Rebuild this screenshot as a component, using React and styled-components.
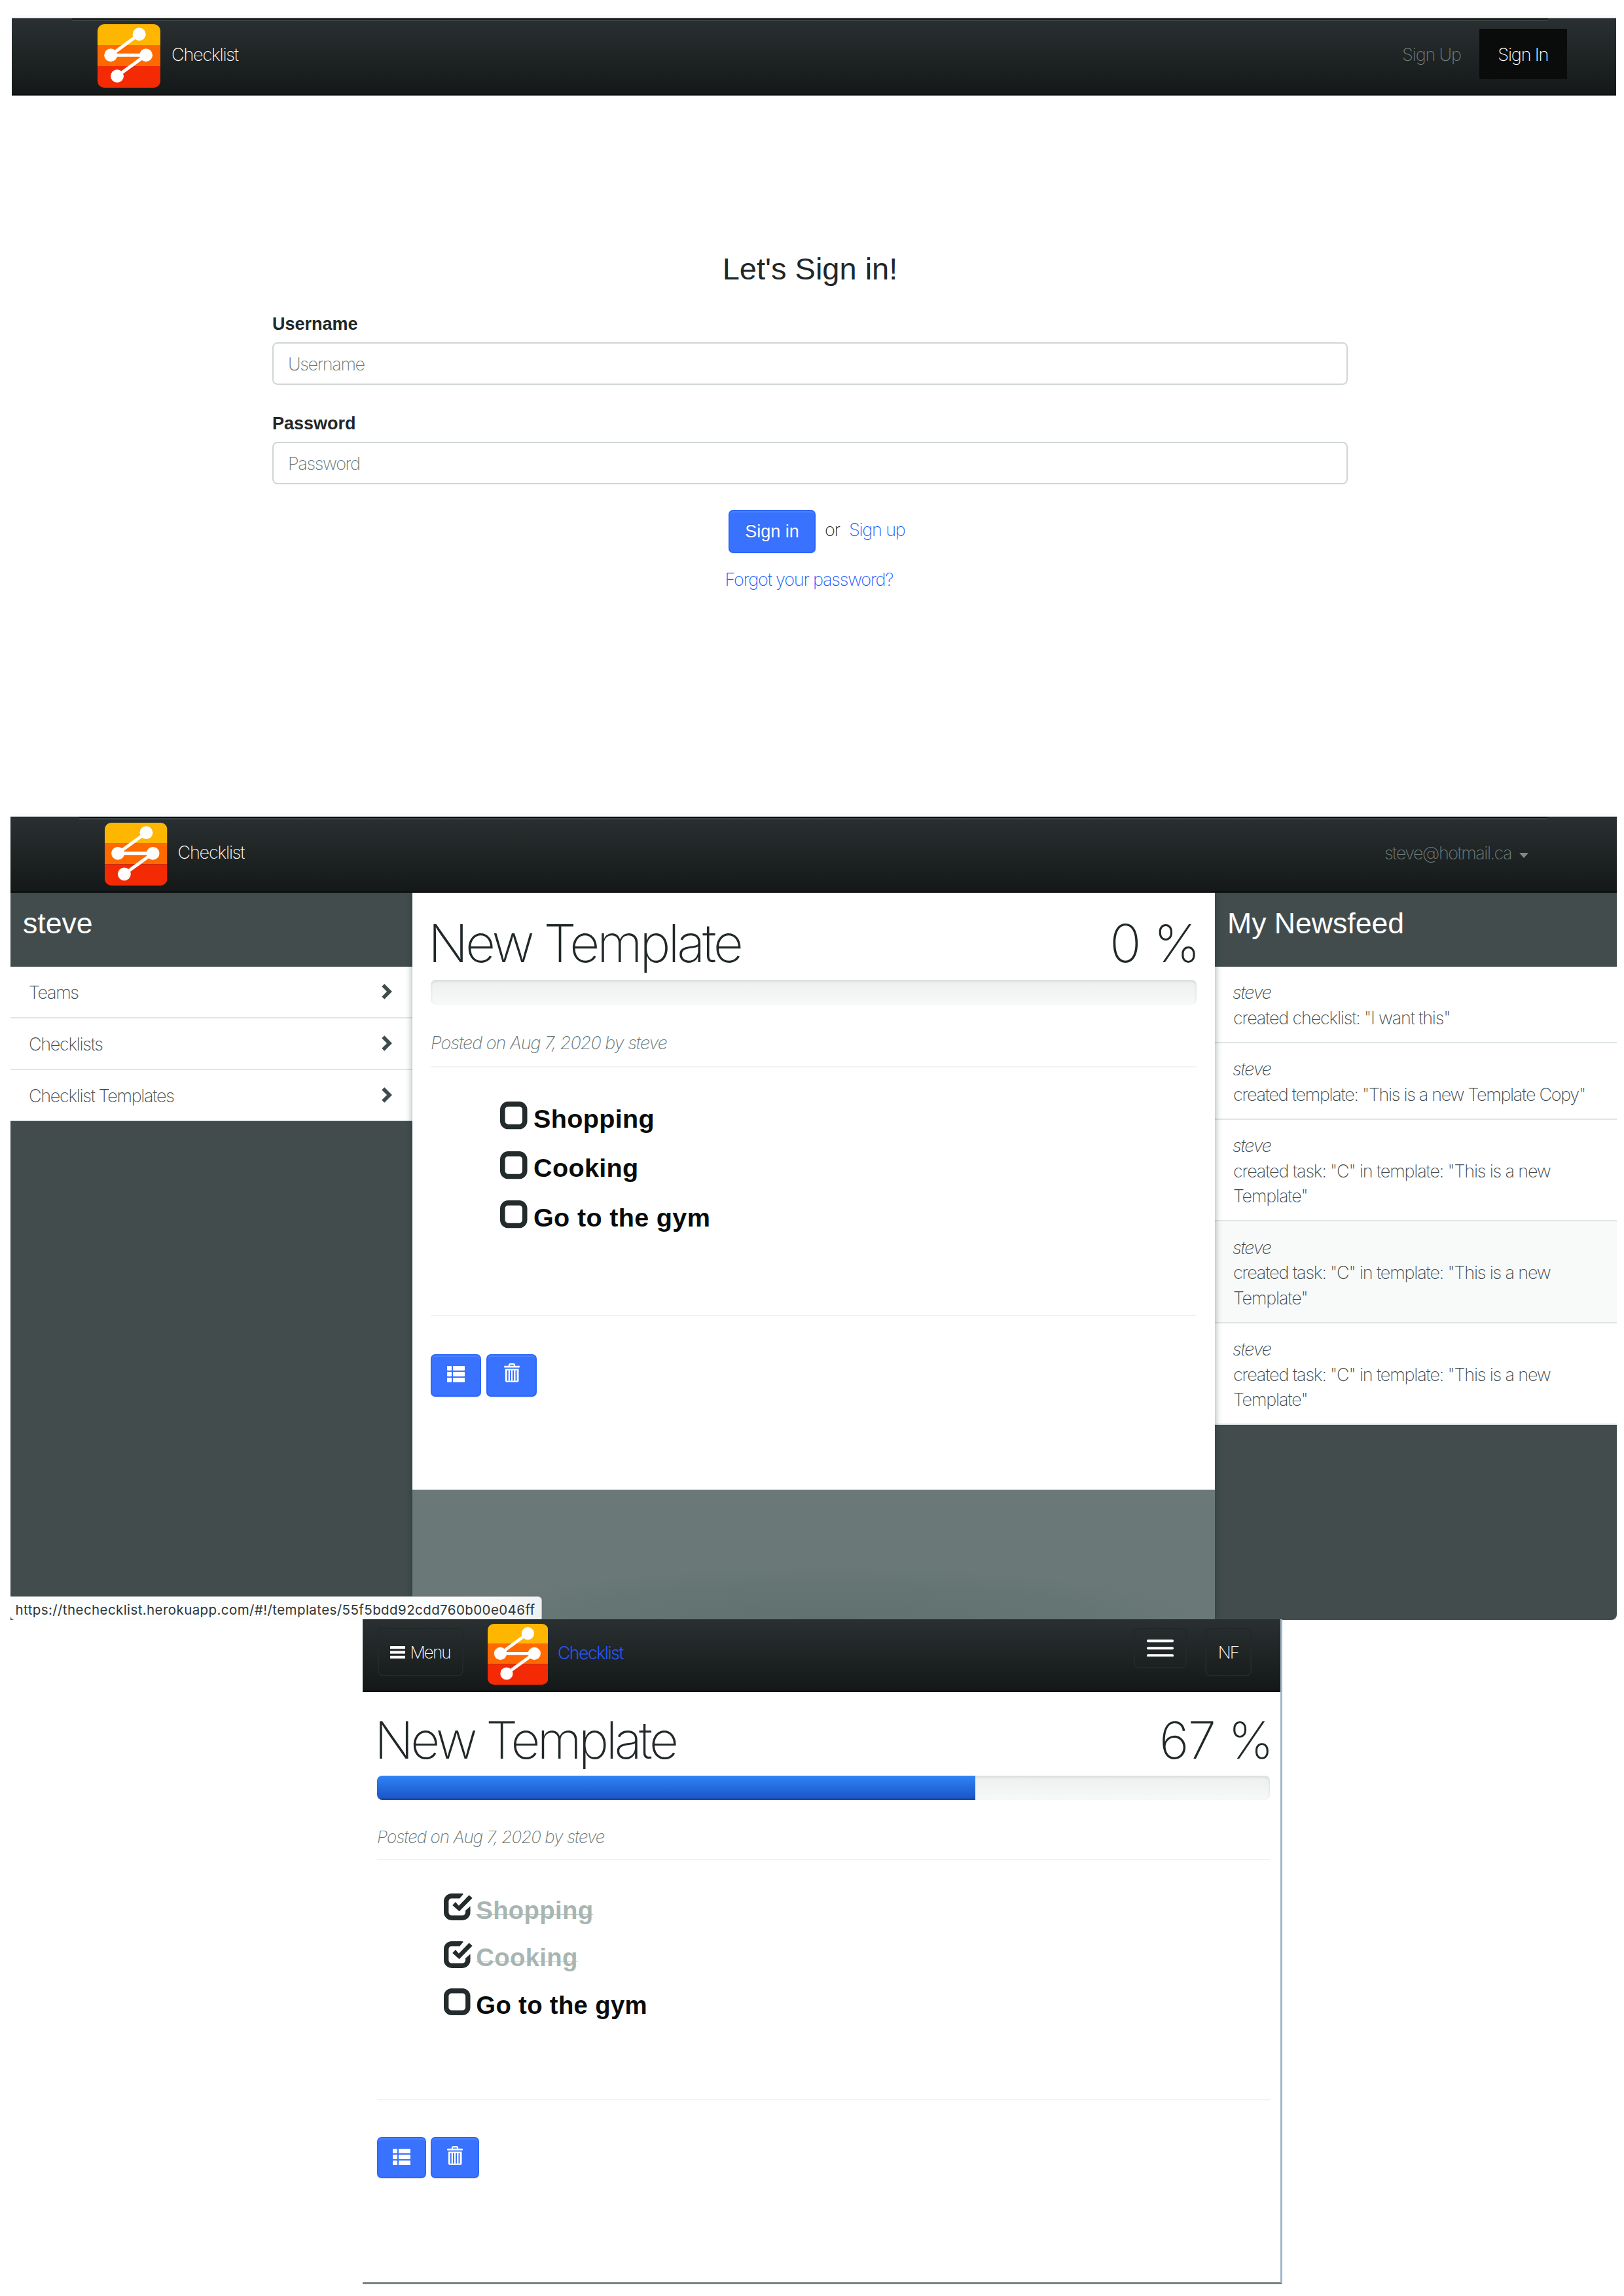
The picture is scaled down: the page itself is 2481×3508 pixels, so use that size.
import React from 'react';
import styled, { createGlobalStyle, css } from 'styled-components';

const light = '"Inter", "Liberation Sans", Helvetica, sans-serif';
const solid = '"Liberation Sans", Helvetica, Arial, sans-serif';

const GlobalStyle = createGlobalStyle`
  *, *::before, *::after { box-sizing: border-box; }
  body {
    margin: 0;
    background: #fff;
    color: #212829;
    font-family: ${light};
    font-size: 27px;
    font-weight: 240;
    font-kerning: normal;
  }
  a { text-decoration: none; color: inherit; }
  svg { display: block; flex: none; }
`;

const Page = styled.main`
  width: 2481px;
  height: 3508px;
  overflow: hidden;
  display: flex;
  flex-direction: column;
  padding-top: 28px;
`;

/* ---------- navigation bar ---------- */

const Nav = styled.nav`
  position: relative;
  z-index: 3;
  display: flex;
  align-items: flex-start;
  height: ${(p) => p.$height}px;
  padding: ${(p) => p.$padding};
  background: linear-gradient(#2a3032, #222728 36%, #141818);
  border-bottom: 2px solid #0a0c0c;
  ${(p) =>
    p.$edge &&
    css`
      box-shadow: 0 -1px 0 #c4c8c8, 0 -5px 0 #fbfbfb;
      &::before {
        content: '';
        position: absolute;
        top: 0;
        left: ${p.$edge[0]}px;
        right: ${p.$edge[1]}px;
        height: 4px;
        background: linear-gradient(#0d0f0f 50%, #394443 50%);
      }
    `}
`;

const Brand = styled.a`
  display: flex;
  align-items: flex-start;
  gap: ${(p) => p.$gap}px;
  margin: ${(p) => p.$top}px auto 0 0;
`;

const BrandName = styled.span`
  margin-top: ${(p) => p.$top}px;
  line-height: 40px;
  font-size: ${(p) => p.$size || 27}px;
  letter-spacing: ${(p) => (p.$color ? -1.45 : -1.17)}px;
  font-weight: ${(p) => (p.$color ? 300 : 200)};
  color: ${(p) => p.$color || '#fff'};
`;

const NavLinks = styled.div`
  display: flex;
  margin-top: 16px;
`;

const NavLink = styled.a`
  width: ${(p) => p.$width}px;
  height: 77px;
  line-height: 79px;
  text-align: center;
  letter-spacing: -1.15px;
  color: ${(p) => (p.$active ? '#fff' : '#6f7d7b')};
  background: ${(p) => (p.$active ? '#0a0c0c' : 'transparent')};
`;

const Account = styled.a`
  display: flex;
  align-items: center;
  gap: 12px;
  margin-top: 36px;
  line-height: 40px;
  letter-spacing: -1.5px;
  color: #6f7d7b;
`;

const Caret = styled.i`
  margin-top: 5px;
  border: 7.5px solid transparent;
  border-top: 8px solid #7d8b89;
  border-bottom: 0;
`;

const NavToggle = styled.button`
  display: flex;
  align-items: center;
  justify-content: center;
  gap: 7px;
  width: ${(p) => p.$width}px;
  height: ${(p) => p.$height}px;
  margin: 13px ${(p) => p.$after}px 0 0;
  padding: 0;
  border: 2px solid #232828;
  border-radius: 8px;
  background: transparent;
  color: #fff;
  font: inherit;
  font-size: 26px;
  letter-spacing: -1.9px;
`;

const Logo = ({ width, height }) => (
  <svg width={width} height={height} viewBox="0 0 96 97" preserveAspectRatio="none">
    <clipPath id="logoShape">
      <rect width="96" height="97" rx="10" />
    </clipPath>
    <g clipPath="url(#logoShape)">
      <rect width="96" height="32" fill="#ffb600" />
      <rect y="32" width="96" height="32" fill="#ff6a00" />
      <rect y="64" width="96" height="33" fill="#f42a05" />
    </g>
    <path d="M63.7 15.3 20.2 47.3H74L30 79.3" fill="none" stroke="#fff" strokeWidth="5" />
    <g fill="#fff">
      <circle cx="63.7" cy="15.3" r="10" />
      <circle cx="20.2" cy="47.3" r="10" />
      <circle cx="74" cy="47.3" r="10" />
      <circle cx="30" cy="79.3" r="10" />
    </g>
  </svg>
);

const Bars = ({ width, height, thickness, radius = 0 }) => (
  <svg width={width} height={height}>
    {[0, (height - thickness) / 2, height - thickness].map((y) => (
      <rect key={y} y={y} width={width} height={thickness} rx={radius} fill="#fff" />
    ))}
  </svg>
);

/* ---------- sign in ---------- */

const SignInWindow = styled.section`
  flex: none;
  width: 2451px;
  height: 1220px;
  margin-left: 18px;
`;

const Form = styled.form`
  display: flex;
  flex-direction: column;
  width: 1643px;
  margin: 235px 0 0 398px;
`;

const FormTitle = styled.h3`
  margin: 0 0 34px;
  text-align: center;
  font: 400 47px/60px ${solid};
`;

const Label = styled.label`
  margin-bottom: 7.5px;
  font: 700 27px/40px ${solid};
`;

const Input = styled.input`
  height: 65px;
  margin-bottom: 39.5px;
  padding: 2px 22px 0;
  border: 2px solid #cfd6d4;
  border-radius: 8px;
  background: #fff;
  font: inherit;
  letter-spacing: -1.35px;
  outline: none;
  &::placeholder { color: #6d7b78; opacity: 1; }
`;

const Actions = styled.div`
  display: flex;
  padding-left: 697px;
  line-height: 62px;
  letter-spacing: -1.1px;
`;

const primary = css`
  border: 2px solid #2d67fb;
  border-radius: 7px;
  background: #3872ff;
  box-shadow: inset 0 2px 0 #4a84ff, 0 1px 2px rgba(0, 0, 0, 0.1);
  color: #fff;
`;

const SubmitButton = styled.button`
  ${primary}
  width: 133px;
  height: 66px;
  margin-right: 14px;
  padding: 1px 0 0;
  font: 400 27px ${solid};
  text-shadow: 0 -1px 0 rgba(0, 0, 0, 0.25);
`;

const FormLink = styled.a`
  margin-left: ${(p) => p.$left}px;
  margin-top: ${(p) => p.$top || 0}px;
  line-height: ${(p) => p.$line}px;
  letter-spacing: -1.2px;
  color: #1a61ff;
`;

/* ---------- dashboard ---------- */

const Dashboard = styled.section`
  flex: none;
  position: relative;
  width: 2454px;
  margin-left: 16px;
`;

const Columns = styled.div`
  display: grid;
  grid-template-columns: 614px 1226px 614px;
  height: 1111px;
`;

const SidePanel = styled.aside`
  background: #424c4d;
  border-radius: 0 0 ${(p) => (p.$rounded ? '8px' : '0')} 0;
`;

const PanelTitle = styled.h3`
  height: 113px;
  margin: 0;
  padding: 17px 0 0 19px;
  font: 400 44.6px/60px ${solid};
  color: #fff;
`;

const MenuRow = styled.a`
  display: flex;
  align-items: flex-start;
  justify-content: space-between;
  height: 78.75px;
  padding: 0 31px 0 28px;
  border-bottom: 2px solid #dfe5e4;
  background: #fff;
  line-height: 80px;
  letter-spacing: -1.32px;
  color: #3f4b4c;
`;

const Chevron = styled.svg`
  margin-top: 26px;
`;

const NewsItem = styled.div`
  padding: 21.3px 28px 16.4px 27px;
  border-bottom: 2px solid #dfe5e4;
  background: ${(p) => (p.$hover ? '#f8f9f9' : '#fff')};
  line-height: 38.6px;
  letter-spacing: -1.22px;
  color: #3f4b4c;
`;

const NewsAuthor = styled.em`
  display: block;
`;

const NewsText = styled.span`
  display: block;
  margin-left: 1px;
  letter-spacing: ${(p) => p.$spacing || -1.2}px;
`;

const Center = styled.div`
  position: relative;
  z-index: 1;
  background: radial-gradient(ellipse 560px 80px at 52% 100%, #617170, #657574 70%, #6a7978 100%);
  background-color: #6a7978;
  box-shadow: 0 0 10px rgba(20, 45, 42, 0.45);
`;

const StatusBar = styled.div`
  position: absolute;
  z-index: 2;
  left: 0;
  bottom: 0;
  width: 812px;
  height: 36px;
  padding-left: 7.5px;
  border-top: 1px solid #b9bfbf;
  border-right: 1px solid #b9bfbf;
  border-radius: 0 6px 0 6px;
  background: linear-gradient(90deg, #fbfcfc 85%, #f0f2f2);
  font-size: 20.5px;
  font-weight: 400;
  line-height: 40px;
  letter-spacing: 0.41px;
  color: #2f3738;
  white-space: nowrap;
`;

/* ---------- template card, shared by desktop and phone ---------- */

const Card = styled.article`
  height: ${(p) => p.$m.height}px;
  padding: ${(p) => p.$m.padding};
  background: #fff;
`;

const Heading = styled.h1`
  display: flex;
  justify-content: space-between;
  margin: 0 -4px;
  font-size: ${(p) => p.$m.head}px;
  line-height: ${(p) => p.$m.headLine}px;
  font-weight: 200;
`;

const HeadingName = styled.span`
  letter-spacing: ${(p) => p.$m.headSpacing}px;
`;

const HeadingPercent = styled.span`
  letter-spacing: -1.8px;
`;

const Progress = styled.div`
  height: ${(p) => p.$m.bar}px;
  margin-top: 11.5px;
  overflow: hidden;
  border-radius: 8px;
  background: linear-gradient(#edefef, #f8f9f9);
  box-shadow: inset 0 2px 4px rgba(20, 50, 45, 0.12);
`;

const ProgressFill = styled.div`
  height: 100%;
  background: linear-gradient(#3084f7, #1a52c4);
  box-shadow: inset 0 -2px 0 rgba(0, 0, 0, 0.2);
`;

const Byline = styled.em`
  display: block;
  margin-top: ${(p) => p.$m.bylineTop}px;
  font-size: ${(p) => p.$m.byline}px;
  line-height: 40px;
  letter-spacing: ${(p) => p.$m.bylineSpacing}px;
  color: #687674;
`;

const Divider = styled.hr`
  height: 2px;
  margin: ${(p) => p.$top}px 0 0;
  border: 0;
  background: #f1f3f3;
`;

const Tasks = styled.ul`
  margin: ${(p) => p.$m.listTop}px 0 0;
  padding: 0 0 0 ${(p) => p.$m.listLeft}px;
  list-style: none;
`;

const Task = styled.li`
  display: flex;
  align-items: flex-start;
  gap: ${(p) => p.$m.taskGap}px;
  height: ${(p) => p.$m.taskHeight}px;
`;

const TaskIcon = styled.svg`
  margin-top: 3.6px;
  overflow: visible;
`;

const TaskName = styled.span`
  font: 700 ${(p) => p.$m.task}px/${(p) => p.$m.taskLine}px ${solid};
  letter-spacing: 0.32px;
  color: ${(p) => (p.$done ? '#a8b6b3' : '#090c0c')};
  ${(p) =>
    p.$done &&
    css`
      text-decoration: underline 1px;
      text-underline-offset: -7px;
      text-decoration-skip-ink: none;
    `}
`;

const Toolbar = styled.div`
  display: flex;
  gap: ${(p) => p.$m.toolGap}px;
  margin-top: ${(p) => p.$m.toolTop}px;
`;

const ToolButton = styled.button`
  ${primary}
  display: flex;
  align-items: flex-start;
  justify-content: center;
  width: ${(p) => p.$m.tool[0]}px;
  height: ${(p) => p.$m.tool[1]}px;
  padding: ${(p) => p.$top}px 0 0;
`;

const ListIcon = () => (
  <svg width="27" height="25" fill="#fff">
    {[0, 9, 18].map((y) => (
      <React.Fragment key={y}>
        <rect y={y} width="7" height="7" rx="1" />
        <rect x="9" y={y} width="18" height="7" rx="1" />
      </React.Fragment>
    ))}
  </svg>
);

const TrashIcon = () => (
  <svg width="24" height="29" viewBox="0 0 24 29">
    <path d="M8 4.5V2.6Q8 1.2 9.4 1.2h5.2Q16 1.2 16 2.6v1.9" fill="none" stroke="#fff" strokeWidth="2.2" />
    <rect y="3.8" width="24" height="2.6" rx="1" fill="#fff" />
    <path d="M1.9 8.4h20.6V26.5q0 2.3-2.3 2.3H4.2q-2.3 0-2.3-2.3z" fill="#fff" />
    {[4.7, 8.9, 13.1, 17.5].map((x) => (
      <rect key={x} x={x} y="10.6" width="2" height="16" fill="#3872ff" />
    ))}
  </svg>
);

const CheckIcon = ({ done, width, height }) => (
  <TaskIcon width={width} height={height} viewBox="0 0 40.5 41" preserveAspectRatio="none">
    {done ? (
      <g fill="#242b2c">
        <path
          d="M24.3 3.7H12A8.3 8.3 0 0 0 3.7 12V28.8A8.3 8.3 0 0 0 12 37.2H28.5A8.3 8.3 0 0 0 36.8 28.8V26.5"
          fill="none"
          stroke="#242b2c"
          strokeWidth="7.4"
        />
        <path d="M24 0h4l2 .8-5.7 6.600H24zM33.100 27v-1l7.400-6.500V27z" />
        <path d="M13.200 18 17.900 13l5 5.800L38.600 2.400l5 4.500-20 20.400z" />
      </g>
    ) : (
      <rect x="3.7" y="3.7" width="33.1" height="33.6" rx="8.3" fill="none" stroke="#242b2c" strokeWidth="7.4" />
    )}
  </TaskIcon>
);

const desktop = {
  height: 912,
  padding: '33px 28px 0',
  head: 80,
  headLine: 88,
  headSpacing: -4.2,
  bar: 38.5,
  bylineTop: 39,
  byline: 27,
  bylineSpacing: -1,
  bylineRule: 14.5,
  listTop: 49,
  listLeft: 106,
  taskGap: 9.5,
  taskHeight: 75.5,
  task: 39.6,
  taskLine: 59,
  icon: [41.5, 42.3],
  toolRule: 102.5,
  toolTop: 58,
  toolGap: 8,
  tool: [77, 65],
};

const phone = {
  height: 902,
  padding: '30.5px 16px 0 22px',
  head: 78,
  headLine: 86,
  headSpacing: -4.55,
  bar: 36.5,
  bylineTop: 37.2,
  byline: 26,
  bylineSpacing: -0.97,
  bylineRule: 13.5,
  listTop: 47.5,
  listLeft: 102,
  taskGap: 8.8,
  taskHeight: 72.6,
  task: 38.3,
  taskLine: 57.5,
  icon: [40.5, 41],
  toolRule: 99.5,
  toolTop: 56,
  toolGap: 7,
  tool: [74.5, 63],
};

const tasks = ['Shopping', 'Cooking', 'Go to the gym'];

const TemplateCard = ({ m, percent, done }) => (
  <Card $m={m}>
    <Heading $m={m}>
      <HeadingName $m={m}>New Template</HeadingName>
      <HeadingPercent>{percent} %</HeadingPercent>
    </Heading>
    <Progress $m={m}>
      <ProgressFill style={{ width: `${percent}%` }} />
    </Progress>
    <Byline $m={m}>Posted on Aug 7, 2020 by steve</Byline>
    <Divider $top={m.bylineRule} />
    <Tasks $m={m}>
      {tasks.map((name, i) => (
        <Task key={name} $m={m}>
          <CheckIcon done={i < done} width={m.icon[0]} height={m.icon[1]} />
          <TaskName $m={m} $done={i < done}>{name}</TaskName>
        </Task>
      ))}
    </Tasks>
    <Divider $top={m.toolRule} />
    <Toolbar $m={m}>
      <ToolButton $m={m} $top={16.5}><ListIcon /></ToolButton>
      <ToolButton $m={m} $top={12.5}><TrashIcon /></ToolButton>
    </Toolbar>
  </Card>
);

/* ---------- phone ---------- */

const Phone = styled.section`
  flex: none;
  position: relative;
  z-index: 4;
  width: 1405px;
  height: 1016px;
  margin: -1px 0 0 554px;
  border-right: 3px solid #a3b6c8;
  border-bottom: 3px solid #74827f;
  background: #fff;
`;

const news = [
  { text: 'created checklist: "I want this"' },
  { text: 'created template: "This is a new Template Copy"', spacing: -1.3 },
  { text: 'created task: "C" in template: "This is a new Template"', spacing: -1.17 },
  { text: 'created task: "C" in template: "This is a new Template"', spacing: -1.17, hover: true },
  { text: 'created task: "C" in template: "This is a new Template"', spacing: -1.17 },
];

export default function App() {
  return (
    <>
      <GlobalStyle />
      <Page>
        <SignInWindow>
          <Nav $height={118} $padding="0 75.5px 0 131px" $edge={[92, 104]}>
            <Brand $gap={17} $top={9}>
              <Logo width={96} height={97} />
              <BrandName $top={26.5}>Checklist</BrandName>
            </Brand>
            <NavLinks>
              <NavLink $width={146}>Sign Up</NavLink>
              <NavLink $width={133.5} $active>Sign In</NavLink>
            </NavLinks>
          </Nav>
          <Form>
            <FormTitle>Let's Sign in!</FormTitle>
            <Label>Username</Label>
            <Input placeholder="Username" />
            <Label>Password</Label>
            <Input placeholder="Password" />
            <Actions>
              <SubmitButton type="button">Sign in</SubmitButton>
              <span>or</span>
              <FormLink $left={14} $line={62}>Sign up</FormLink>
            </Actions>
            <FormLink $left={691.5} $top={20.5} $line={40}>Forgot your password?</FormLink>
          </Form>
        </SignInWindow>

        <Dashboard>
          <Nav $height={116} $padding="0 135px 0 144px" $edge={[105, 106]}>
            <Brand $gap={16} $top={9}>
              <Logo width={95.5} height={96} />
              <BrandName $top={26}>Checklist</BrandName>
            </Brand>
            <Account>
              steve@hotmail.ca
              <Caret />
            </Account>
          </Nav>
          <Columns>
            <SidePanel>
              <PanelTitle>steve</PanelTitle>
              {['Teams', 'Checklists', 'Checklist Templates'].map((name) => (
                <MenuRow key={name}>
                  {name}
                  <Chevron width="16" height="24" viewBox="0 0 16 24">
                    <path d="M2.3 2.3 12 12 2.3 21.7" fill="none" stroke="#3f4b4c" strokeWidth="5.6" />
                  </Chevron>
                </MenuRow>
              ))}
            </SidePanel>
            <Center>
              <TemplateCard m={desktop} percent={0} done={0} />
            </Center>
            <SidePanel $rounded>
              <PanelTitle>My Newsfeed</PanelTitle>
              {news.map((item, i) => (
                <NewsItem key={i} $hover={item.hover}>
                  <NewsAuthor>steve</NewsAuthor>
                  <NewsText $spacing={item.spacing}>{item.text}</NewsText>
                </NewsItem>
              ))}
            </SidePanel>
          </Columns>
          <StatusBar>https://thechecklist.herokuapp.com/#!/templates/55f5bdd92cdd760b00e046ff</StatusBar>
        </Dashboard>

        <Phone>
          <Nav $height={111} $padding="0 44px 0 22.5px">
            <NavToggle $width={131} $height={74} $after={37}>
              <Bars width={23} height={19} thickness={4.2} />
              Menu
            </NavToggle>
            <Brand $gap={15} $top={7}>
              <Logo width={92.5} height={93} />
              <BrandName $top={23.5} $size={26.5} $color="#2558f4">Checklist</BrandName>
            </Brand>
            <NavToggle $width={81} $height={62} $after={28.5}>
              <Bars width={41} height={26.5} thickness={4.2} radius={2} />
            </NavToggle>
            <NavToggle $width={71} $height={74} $after={0}>NF</NavToggle>
          </Nav>
          <TemplateCard m={phone} percent={67} done={2} />
        </Phone>
      </Page>
    </>
  );
}
